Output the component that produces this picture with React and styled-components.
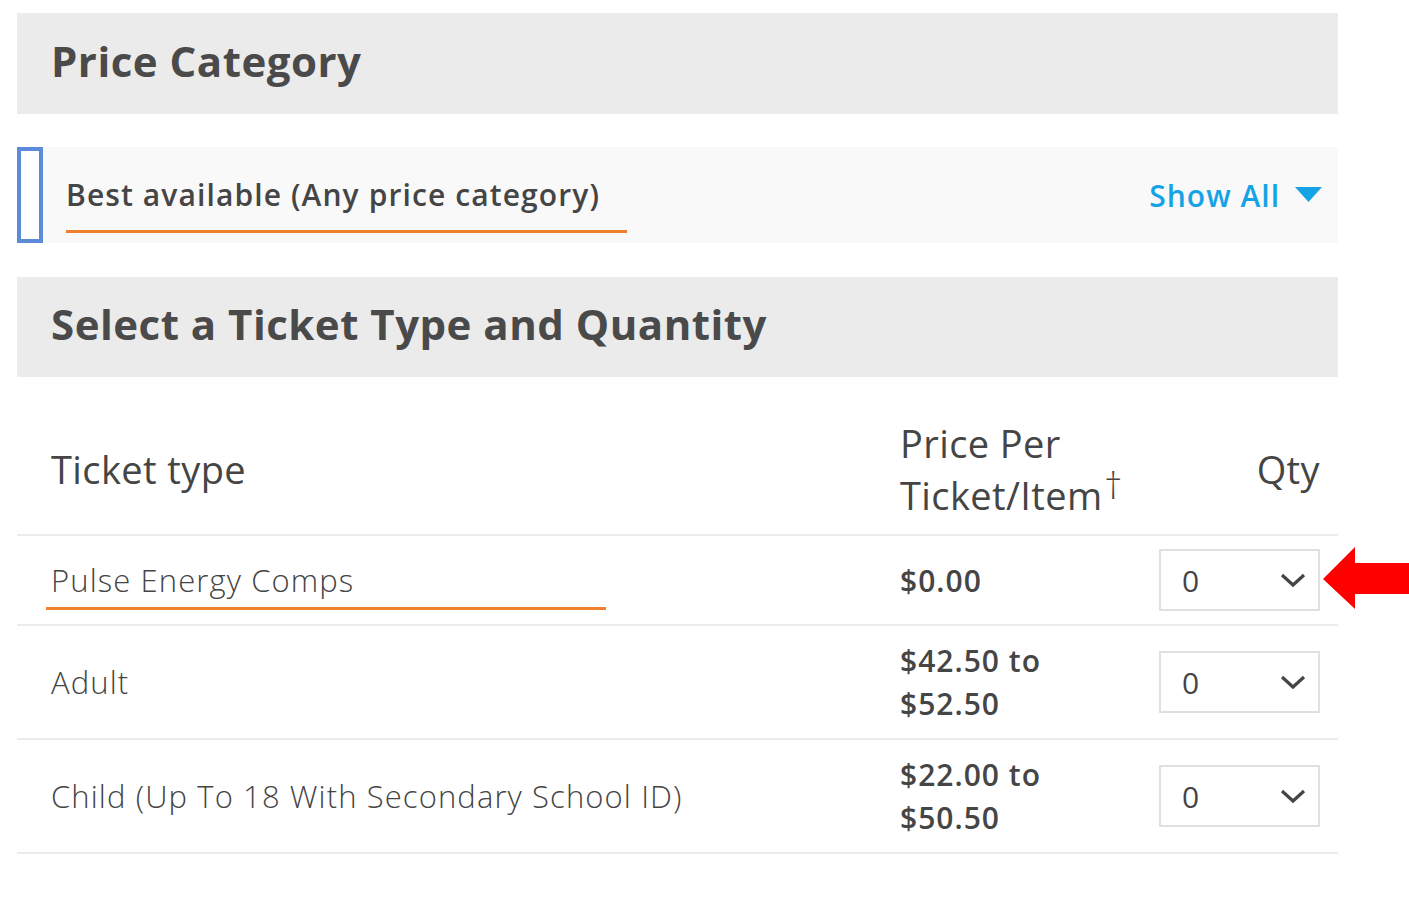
import React from "react";
import styled, { createGlobalStyle } from "styled-components";

const Global = createGlobalStyle`
  html, body { margin: 0; padding: 0; background: #ffffff; }
  body { font-family: "Open Sans", "Noto Sans", sans-serif; color: #454545; }
`;

const Page = styled.div`
  position: relative;
  width: 1409px;
  height: 913px;
  padding: 13px 0 0 17px;
  box-sizing: border-box;
  overflow: hidden;
`;

const Column = styled.div`
  width: 1321px;
  display: flex;
  flex-direction: column;
`;

const SectionHeader = styled.div`
  height: ${(p) => p.$h}px;
  box-sizing: border-box;
  background: #ebebeb;
  display: flex;
  align-items: center;
  padding: 0 0 7px 34px;
  margin-bottom: ${(p) => p.$mb || 0}px;
  font-size: 42px;
  font-weight: 700;
  color: #4a4a4a;
  letter-spacing: 0.5px;
`;

const CategoryRow = styled.div`
  height: 96px;
  background: #f9f9f9;
  display: flex;
  align-items: center;
  margin-bottom: 34px;
`;

const FocusBox = styled.div`
  width: 26px;
  height: 96px;
  box-sizing: border-box;
  border: 4px solid #5b8bd9;
  background: #ffffff;
  flex: none;
`;

const CategoryLabel = styled.div`
  align-self: flex-start;
  margin-left: 23px;
  padding: 28px 27px 15px 0;
  border-bottom: 3px solid #f07f2f;
  font-size: 30px;
  font-weight: 600;
  letter-spacing: 1.1px;
  color: #454545;
  line-height: 40px;
`;

const ShowAll = styled.div`
  margin-left: auto;
  margin-right: 16px;
  display: flex;
  align-items: center;
  gap: 15px;
  color: #16a3e6;
  font-size: 30px;
  font-weight: 600;
  letter-spacing: 1px;
`;

const Table = styled.div`
  display: flex;
  flex-direction: column;
`;

const Row = styled.div`
  display: grid;
  grid-template-columns: 849px 259px 161px;
  padding: ${(p) => (p.$head ? "40px 18px 13px 34px" : "13px 18px 13px 34px")};
  align-items: center;
  border-bottom: 2px solid #ececec;
`;

const HeadCell = styled.div`
  font-size: 38px;
  font-weight: 400;
  letter-spacing: 0.4px;
  line-height: 52px;
  color: #454545;
  text-align: ${(p) => (p.$right ? "right" : "left")};
`;

const Dagger = styled.span`
  display: inline-block;
  font-size: 36px;
  font-weight: 300;
  line-height: 0;
  margin-left: 2px;
  vertical-align: 11px;
`;

const TicketName = styled.div`
  font-size: 31px;
  font-weight: 300;
  letter-spacing: 1.1px;
  color: #454545;
  line-height: 43px;
  ${(p) =>
    p.$underline &&
    `
    margin-left: -5px;
    padding-left: 5px;
    width: 555px;
    border-bottom: 3px solid #f07f2f;
    padding-bottom: 5px;
    margin-top: 8px;
  `}
`;

const Price = styled.div`
  font-size: 30px;
  font-weight: 600;
  letter-spacing: 1px;
  line-height: 43px;
  color: #454545;
`;

const Select = styled.div`
  height: 62px;
  box-sizing: border-box;
  border: 2px solid #e0e0e0;
  display: flex;
  align-items: center;
  justify-content: space-between;
  padding: 0 12px 0 21px;
  font-size: 30px;
  font-weight: 400;
  color: #454545;
  background: #ffffff;
`;

const Arrow = styled.svg`
  position: absolute;
  left: 1322px;
  top: 546px;
`;

const rows = [
  { name: "Pulse Energy Comps", price: ["$0.00"], underline: true },
  { name: "Adult", price: ["$42.50 to", "$52.50"] },
  { name: "Child (Up To 18 With Secondary School ID)", price: ["$22.00 to", "$50.50"] },
];

const Chevron = () => (
  <svg width="26" height="16" viewBox="0 0 26 16">
    <path d="M2 3 L13 13 L24 3" fill="none" stroke="#454545" strokeWidth="3.2" />
  </svg>
);

export default function App() {
  return (
    <>
      <Global />
      <Page>
        <Column>
          <SectionHeader $h={101} $mb={33}>Price Category</SectionHeader>
          <CategoryRow>
            <FocusBox />
            <CategoryLabel>Best available (Any price category)</CategoryLabel>
            <ShowAll>
              Show All
              <svg width="27" height="16" viewBox="0 0 27 16">
                <path d="M0 0 H27 L13.5 15 Z" fill="#16a3e6" />
              </svg>
            </ShowAll>
          </CategoryRow>
          <SectionHeader $h={100}>Select a Ticket Type and Quantity</SectionHeader>
          <Table>
            <Row $head>
              <HeadCell>Ticket type</HeadCell>
              <HeadCell>
                Price Per
                <br />
                Ticket/Item<Dagger>†</Dagger>
              </HeadCell>
              <HeadCell $right>Qty</HeadCell>
            </Row>
            {rows.map((r) => (
              <Row key={r.name}>
                <TicketName $underline={r.underline}>{r.name}</TicketName>
                <Price>
                  {r.price.map((p) => (
                    <div key={p}>{p}</div>
                  ))}
                </Price>
                <Select>
                  0
                  <Chevron />
                </Select>
              </Row>
            ))}
          </Table>
        </Column>
        <Arrow width="87" height="64" viewBox="0 0 87 64">
          <path d="M1 33 L33 1 L33 17 L87 17 L87 48 L33 48 L33 63 Z" fill="#ff0000" />
        </Arrow>
      </Page>
    </>
  );
}
